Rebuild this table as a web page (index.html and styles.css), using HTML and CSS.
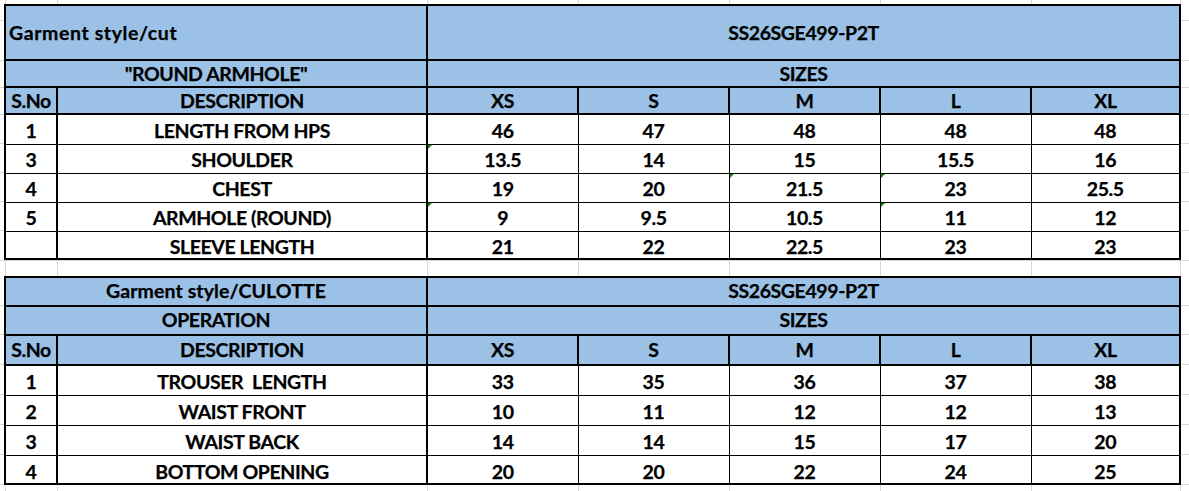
FILE: index.html
```html
<!DOCTYPE html>
<html lang="en">
<head>
<meta charset="utf-8">
<title>Measurement chart</title>
<link rel="stylesheet" href="styles.css">
</head>
<body>
<div class="sheet">
  <table class="spec spec-top">
    <colgroup>
      <col class="c-sno"><col class="c-desc"><col class="c-size"><col class="c-size"><col class="c-size"><col class="c-size"><col class="c-xl">
    </colgroup>
    <tr class="r-title">
      <th colspan="2" class="hd left mid wide">Garment style/cut</th>
      <th colspan="5" class="hd mid">SS26SGE499-P2T</th>
    </tr>
    <tr class="r-sub">
      <th colspan="2" class="hd">"ROUND ARMHOLE"</th>
      <th colspan="5" class="hd">SIZES</th>
    </tr>
    <tr class="r-head">
      <th class="hd">S.No</th><th class="hd">DESCRIPTION</th>
      <th class="hd">XS</th><th class="hd">S</th><th class="hd">M</th><th class="hd">L</th><th class="hd">XL</th>
    </tr>
    <tr class="r-data r-first">
      <td class="sno">1</td><td class="desc">LENGTH FROM HPS</td>
      <td>46</td><td>47</td><td>48</td><td>48</td><td>48</td>
    </tr>
    <tr class="r-data">
      <td class="sno">3</td><td class="desc">SHOULDER</td>
      <td class="flag">13.5</td><td>14</td><td>15</td><td>15.5</td><td>16</td>
    </tr>
    <tr class="r-data">
      <td class="sno">4</td><td class="desc">CHEST</td>
      <td>19</td><td>20</td><td class="flag">21.5</td><td class="flag">23</td><td>25.5</td>
    </tr>
    <tr class="r-data">
      <td class="sno">5</td><td class="desc">ARMHOLE (ROUND)</td>
      <td class="flag">9</td><td>9.5</td><td>10.5</td><td class="flag">11</td><td>12</td>
    </tr>
    <tr class="r-data r-last">
      <td class="sno"></td><td class="desc">SLEEVE LENGTH</td>
      <td>21</td><td>22</td><td>22.5</td><td>23</td><td>23</td>
    </tr>
  </table>

  <table class="spec spec-bottom">
    <colgroup>
      <col class="c-sno"><col class="c-desc"><col class="c-size"><col class="c-size"><col class="c-size"><col class="c-size"><col class="c-xl">
    </colgroup>
    <tr class="r-title2">
      <th colspan="2" class="hd mixed">Garment style/CULOTTE</th>
      <th colspan="5" class="hd">SS26SGE499-P2T</th>
    </tr>
    <tr class="r-sub2">
      <th colspan="2" class="hd">OPERATION</th>
      <th colspan="5" class="hd">SIZES</th>
    </tr>
    <tr class="r-head2">
      <th class="hd">S.No</th><th class="hd">DESCRIPTION</th>
      <th class="hd">XS</th><th class="hd">S</th><th class="hd">M</th><th class="hd">L</th><th class="hd">XL</th>
    </tr>
    <tr class="r-data2">
      <td class="sno">1</td><td class="desc keep">TROUSER  LENGTH</td>
      <td>33</td><td>35</td><td>36</td><td>37</td><td>38</td>
    </tr>
    <tr class="r-data2">
      <td class="sno">2</td><td class="desc">WAIST FRONT</td>
      <td>10</td><td>11</td><td>12</td><td>12</td><td>13</td>
    </tr>
    <tr class="r-data2">
      <td class="sno">3</td><td class="desc">WAIST BACK</td>
      <td>14</td><td>14</td><td>15</td><td>17</td><td>20</td>
    </tr>
    <tr class="r-data2 r-last2">
      <td class="sno">4</td><td class="desc">BOTTOM OPENING</td>
      <td>20</td><td>20</td><td>22</td><td>24</td><td>25</td>
    </tr>
  </table>
</div>
</body>
</html>
```

FILE: styles.css
```css
html, body {
  margin: 0;
  padding: 0;
  background: #ffffff;
}

.sheet {
  width: 1189px;
  height: 491px;
  box-sizing: border-box;
  padding: 4px 0 0 4px;
  overflow: hidden;
  background-color: #ffffff;
  background-repeat: no-repeat;
  background-image:
    linear-gradient(#d9d9d9, #d9d9d9), linear-gradient(#d9d9d9, #d9d9d9),
    linear-gradient(#d9d9d9, #d9d9d9), linear-gradient(#d9d9d9, #d9d9d9),
    linear-gradient(#d9d9d9, #d9d9d9), linear-gradient(#d9d9d9, #d9d9d9),
    linear-gradient(#d9d9d9, #d9d9d9), linear-gradient(#d9d9d9, #d9d9d9),
    linear-gradient(#d9d9d9, #d9d9d9), linear-gradient(#d9d9d9, #d9d9d9),
    linear-gradient(#d9d9d9, #d9d9d9), linear-gradient(#d9d9d9, #d9d9d9),
    linear-gradient(#d9d9d9, #d9d9d9), linear-gradient(#d9d9d9, #d9d9d9),
    linear-gradient(#d9d9d9, #d9d9d9), linear-gradient(#d9d9d9, #d9d9d9),
    linear-gradient(#d9d9d9, #d9d9d9), linear-gradient(#d9d9d9, #d9d9d9),
    linear-gradient(#d9d9d9, #d9d9d9), linear-gradient(#d9d9d9, #d9d9d9),
    linear-gradient(#d9d9d9, #d9d9d9), linear-gradient(#d9d9d9, #d9d9d9),
    linear-gradient(#d9d9d9, #d9d9d9), linear-gradient(#d9d9d9, #d9d9d9);
  background-size:
    1px 100%, 1px 100%, 1px 100%, 1px 100%, 1px 100%, 1px 100%, 1px 100%, 1px 100%,
    100% 1px, 100% 1px, 100% 1px, 100% 1px, 100% 1px, 100% 1px, 100% 1px, 100% 1px,
    100% 1px, 100% 1px, 100% 1px, 100% 1px, 100% 1px, 100% 1px, 100% 1px, 100% 1px;
  background-position:
    5px 0, 57px 0, 427px 0, 578px 0, 729px 0, 880px 0, 1031px 0, 1180px 0,
    0 20px, 0 60px, 0 87px, 0 114px, 0 143px, 0 172px, 0 201px, 0 230px,
    0 260px, 0 305px, 0 334px, 0 364px, 0 394px, 0 424px, 0 454px, 0 484px;
}

.spec {
  border-collapse: collapse;
  table-layout: fixed;
  width: 1177px;
  font-family: Lato, "Liberation Sans", Arial, sans-serif;
  font-weight: 700;
  font-size: 19.5px;
  line-height: 20px;
  letter-spacing: -0.4px;
  -webkit-text-stroke: 0.25px #000000;
  color: #000000;
  border: 2px solid #000000;
}

.spec-bottom {
  margin-top: 16px;
}

.c-sno { width: 52px; }
.c-desc { width: 370px; }
.c-size { width: 151px; }
.c-xl { width: 149px; }

.spec th,
.spec td {
  padding: 0 3px 3px 3px;
  text-align: center;
  vertical-align: bottom;
  white-space: nowrap;
  overflow: visible;
  font-weight: 700;
}

.spec th.hd {
  background: #9bc2e6;
  border: 2px solid #000000;
}

.spec-top th.hd { padding-bottom: 2px; }
.spec-bottom th.hd { padding-bottom: 4px; }

.spec th.left { text-align: left; }
.spec th.mid,
.spec-top th.mid { vertical-align: middle; padding-bottom: 0; }
.spec th.wide { letter-spacing: 0.6px; }
.spec th.mixed { letter-spacing: 0.1px; }

.spec td {
  background: #ffffff;
  border: 1px solid #000000;
  position: relative;
}

.spec td.sno,
.spec td.desc {
  border-right: 2px solid #000000;
}

.spec td.keep { white-space: pre; }

.spec td.flag::before {
  content: "";
  position: absolute;
  top: 0;
  left: 0;
  border-top: 4px solid #1e7d1e;
  border-right: 4px solid transparent;
}

.r-title { height: 55px; }
.r-sub { height: 27px; }
.r-head { height: 27px; }
.r-data { height: 29px; }
.r-first { height: 30px; }
.r-last { height: 28px; }
.r-last td { padding-bottom: 1px; }

.r-title2 { height: 29px; }
.r-sub2 { height: 29px; }
.r-head2 { height: 30px; }
.r-data2 { height: 30px; }
.r-last2 { height: 29px; }
.r-last2 td { padding-bottom: 1px; }
```
